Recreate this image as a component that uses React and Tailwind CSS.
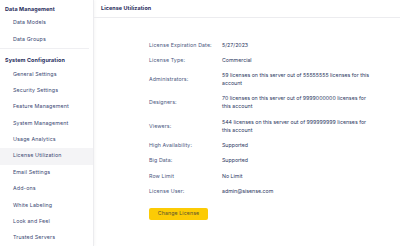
const groups = [
  { title: "Data Management", items: ["Data Models", "Data Groups"] },
  {
    title: "System Configuration",
    items: [
      "General Settings",
      "Security Settings",
      "Feature Management",
      "System Management",
      "Usage Analytics",
      "License Utilization",
      "Email Settings",
      "Add-ons",
      "White Labeling",
      "Look and Feel",
      "Trusted Servers",
    ],
  },
];

const rows = [
  ["License Expiration Date:", "5/27/2023"],
  ["License Type:", "Commercial"],
  ["Administrators:", "59 licenses on this server out of 55555555 licenses for this account"],
  ["Designers:", "70 licenses on this server out of 9999000000 licenses for this account"],
  ["Viewers:", "544 licenses on this server out of 999999999 licenses for this account"],
  ["High Availability:", "Supported"],
  ["Big Data:", "Supported"],
  ["Row Limit", "No Limit"],
  ["License User:", "admin@sisense.com"],
];

function Sidebar() {
  return (
    <aside className="w-[94px] shrink-0 border-r border-[#ececef] shadow-[1px_0_3px_rgba(0,0,0,0.04)]">
      {/* Data Management */}
      <div className="h-[15px] pt-[3px] pl-[5px] text-[5.4px] leading-[12px] font-bold tracking-[0.12px] text-[#1f2b5b]">
        {groups[0].title}
      </div>
      {groups[0].items.map((item) => (
        <div key={item} className="h-[16.4px] flex items-center pl-[13px] text-[5.3px] tracking-[0.15px] text-[#3b4873]">
          {item}
        </div>
      ))}
      <div className="mr-[4px] border-b border-[#efeff2]" />

      {/* System Configuration */}
      <div className="h-[17.5px] pt-[6px] pl-[5px] text-[5.4px] leading-[11.5px] font-bold tracking-[0.12px] text-[#1f2b5b]">
        {groups[1].title}
      </div>
      {groups[1].items.map((item) => (
        <div
          key={item}
          className={
            "h-[16.4px] flex items-center pl-[13px] text-[5.3px] tracking-[0.15px] text-[#3b4873] " +
            (item === "License Utilization" ? "bg-[#f4f4f6]" : "")
          }
        >
          {item}
        </div>
      ))}
    </aside>
  );
}

export default function App() {
  return (
    <div className="flex h-[246px] w-[400px] overflow-hidden bg-white font-['Inter',sans-serif]">
      <Sidebar />
      <main className="flex-1">
        <div className="h-[18px] border-b border-[#ececef] pl-[7px] flex items-center pb-[1px] text-[5.4px] font-bold tracking-[0.1px] text-[#1f2b5b]">
          License Utilization
        </div>
        <div className="pl-[55px] pt-[22.5px]">
          <div className="grid grid-cols-[73px_150px] gap-y-[7.3px] items-center text-[5.25px] leading-[8px]">
            {rows.map(([label, value]) => (
              <div key={label} className="contents">
                <div className="tracking-[0.12px] text-[#4b5780]">{label}</div>
                <div className="text-[#2c3862]">{value}</div>
              </div>
            ))}
          </div>
          <button
            type="button"
            className="mt-[13px] h-[12px] w-[59px] rounded-[2px] bg-[#fccb05] text-[5.25px] tracking-[0.1px] text-[#5a5230]"
          >
            Change License
          </button>
        </div>
      </main>
    </div>
  );
}
